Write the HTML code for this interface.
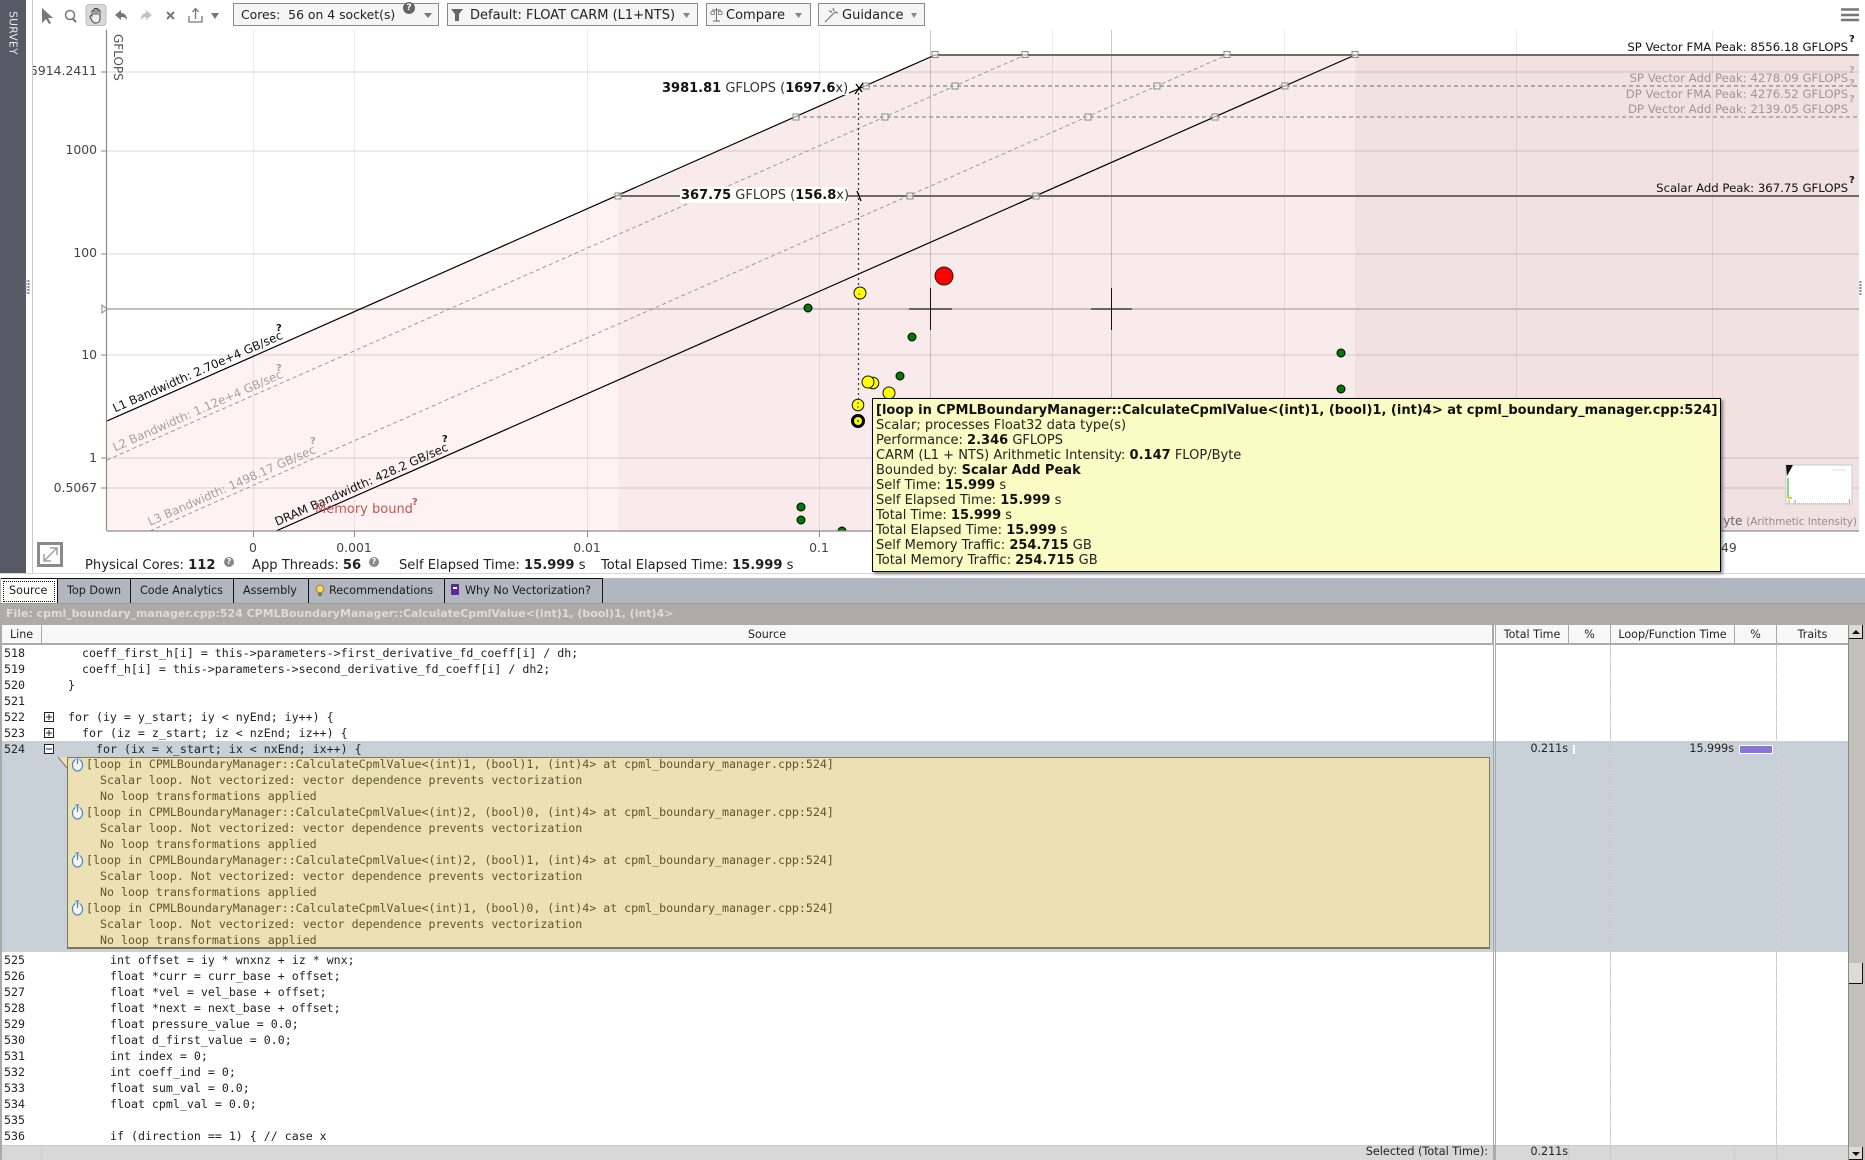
<!DOCTYPE html>
<html><head><meta charset="utf-8">
<style>
html,body{margin:0;padding:0;background:#fff;width:1865px;height:1160px;overflow:hidden;font-family:"DejaVu Sans","Liberation Sans",sans-serif;color:#222}
.a{position:absolute;white-space:pre}
.btn{position:absolute;top:3px;height:23px;background:#f5f5f5;border:1px solid #8a8a8a;box-sizing:border-box}
.tb{font-size:13px;line-height:23px;top:4px;color:#222}
.tab{position:absolute;top:579px;height:24px;box-sizing:border-box;border-right:1px solid #111;font-size:11.2px;line-height:23px;color:#1a1a1a}
.m{font-family:"DejaVu Sans Mono","Liberation Mono",monospace;font-size:11.62px;line-height:16px;height:16px;color:#222}
.n{color:#5c5832}
.hdr{position:absolute;top:625px;height:20px;box-sizing:border-box;border-bottom:2px solid #aaa;border-right:1px solid #aaa;background:#f8f8f8;font-size:11.1px;line-height:20px;text-align:center;color:#222}
.tip{position:absolute;left:872px;top:398px;width:849px;height:174px;background:#fbfbc4;border:1px solid #000;box-sizing:border-box;box-shadow:2px 2px 3px rgba(0,0,0,.45);font-size:13.02px;line-height:15px;padding:4px 0 0 3px;color:#222;white-space:pre}
.tip b{color:#111}
.st{top:558px;font-size:13.1px;line-height:16px}
.q{width:10px;height:10px;border-radius:50%;background:#888;color:#fff;font-size:8px;line-height:10px;text-align:center;font-weight:bold}
.v{width:1px;background:repeating-linear-gradient(#ccc 0,#ccc 15px,#eee 15px,#eee 16px)}
svg text{font-family:"DejaVu Sans","Liberation Sans",sans-serif}
</style></head><body>

<!-- sidebar -->
<div class="a" style="left:0;top:0;width:26px;height:573px;background:#555a65"></div>
<div class="a" style="left:32px;top:0;width:1px;height:573px;background:#c8c8c8"></div>
<div class="a" style="left:13px;top:33px;font-size:10.7px;color:#e8e8e8;transform:translate(-50%,-50%) rotate(90deg);letter-spacing:.3px">SURVEY</div>

<!-- chart -->
<svg class="a" style="left:0;top:0" width="1865" height="580" viewBox="0 0 1865 580">
<defs><clipPath id="c"><rect x="107" y="30" width="1752" height="501"/></clipPath></defs>
<g clip-path="url(#c)">
<polygon points="107,421 618,196 618,531 107,531" fill="#fef3f2"/>
<polygon points="618,196 935,55 1355,55 1355,531 618,531" fill="#f9ebeb"/>
<rect x="1355" y="55" width="504" height="476" fill="#f1e1e1"/>
<g stroke="#000" stroke-opacity=".07" stroke-width="2">
<path d="M107 72H1859M107 151H1859M107 254H1859M107 355H1859M107 458H1859M107 488H1859"/>
</g>
<g stroke="#000" stroke-opacity=".08" stroke-width="1">
<path d="M253.500 30V531M354.500 30V531M587.500 30V531M819.500 30V531M1052.500 30V531M1284.500 30V531M1516.500 30V531M1712.500 30V531"/>
</g>
<path d="M930.500 30V531M1111.500 30V531" stroke="#000" stroke-opacity=".2"/>
<path d="M107 309H1859" stroke="#c4c0c0" stroke-width="2"/>
<path d="M935 55H1859" stroke="#6e6a6a" stroke-width="2"/>
<path d="M866 86H1859" stroke="#aaa" stroke-width="2" stroke-dasharray="4 3"/>
<path d="M796 117H1859" stroke="#b5b0b0" stroke-width="2" stroke-dasharray="4 3"/>
<path d="M618 196H1859" stroke="#6e6a6a" stroke-width="2"/>
<path d="M107 421L935 55" stroke="#000" stroke-width="1.200"/>
<path d="M107 460L1025 55" stroke="#999" stroke-width="1" stroke-dasharray="4 3"/>
<path d="M150 531L1227 55" stroke="#999" stroke-width="1" stroke-dasharray="4 3"/>
<path d="M276 531L1355 55" stroke="#000" stroke-width="1.200"/>
<g fill="#fff" fill-opacity=".6" stroke="#888" stroke-width="1">
<rect x="932" y="51.500" width="6" height="6"/><rect x="1022" y="51.500" width="6" height="6"/><rect x="1224" y="51.500" width="6" height="6"/><rect x="1352" y="51.500" width="6" height="6"/>
<rect x="863" y="83" width="6" height="6"/><rect x="952" y="83" width="6" height="6"/><rect x="1154" y="83" width="6" height="6"/><rect x="1282" y="83" width="6" height="6"/>
<rect x="793" y="114" width="6" height="6"/><rect x="882" y="114" width="6" height="6"/><rect x="1085" y="114" width="6" height="6"/><rect x="1212" y="114" width="6" height="6"/>
<rect x="615" y="193" width="6" height="6"/><rect x="907" y="193" width="6" height="6"/><rect x="1033" y="193" width="6" height="6"/>
</g>
<!-- crosshairs -->
<path d="M909 309H952M1091 309H1132" stroke="#666" stroke-width="2"/>
<path d="M930.500 288V330M1111.500 288V330" stroke="#111"/>
<!-- dotted -->
<path d="M858.500 88V400" stroke="#333" stroke-width="1.200" stroke-dasharray="2 3"/>
<path d="M856 84L862 92M855 94L863 83M857 191L861 201" stroke="#000" stroke-width="1.300"/>
<!-- points -->
<g stroke="#000" stroke-width="1" fill="#007a00">
<circle cx="808" cy="308" r="4"/><circle cx="912" cy="337" r="4"/><circle cx="900" cy="376" r="4"/><circle cx="1341" cy="353" r="4"/><circle cx="1341" cy="389" r="4"/><circle cx="801" cy="507" r="4"/><circle cx="801" cy="520" r="4"/><circle cx="842" cy="531" r="4"/>
</g>
<g stroke="#111" stroke-width="1" fill="#ffff00">
<circle cx="860" cy="293" r="6"/><circle cx="873" cy="383" r="5.800"/><circle cx="868" cy="382" r="6"/><circle cx="889" cy="393" r="6"/><circle cx="858" cy="405" r="5.800"/>
</g>
<circle cx="858" cy="421" r="5.500" fill="#ffff00" stroke="#000" stroke-width="3"/>
<circle cx="858" cy="421" r="1" fill="#333"/><circle cx="858" cy="403" r=".8" fill="#333"/><circle cx="858" cy="407" r=".8" fill="#333"/><circle cx="859" cy="294" r=".7" fill="#333"/>
<circle cx="944" cy="276" r="9" fill="#ff0000" stroke="#222"/>
<!-- diagonal labels -->
<text transform="translate(115,412.500) rotate(-23.800)" font-size="11.800" fill="#111">L1 Bandwidth: 2.70e+4 GB/sec</text>
<text transform="translate(115,451.500) rotate(-23.800)" font-size="11.800" fill="#a5a0a0">L2 Bandwidth: 1.12e+4 GB/sec</text>
<text transform="translate(150,526) rotate(-23.800)" font-size="11.800" fill="#a5a0a0">L3 Bandwidth: 1498.17 GB/sec</text>
<text transform="translate(277,526) rotate(-23.800)" font-size="11.800" fill="#111">DRAM Bandwidth: 428.2 GB/sec</text>
<text x="276" y="331" font-size="10" font-weight="bold" fill="#111">?</text>
<text x="276" y="371" font-size="10" font-weight="bold" fill="#a5a0a0">?</text>
<text x="310" y="444" font-size="10" font-weight="bold" fill="#a5a0a0">?</text>
<text x="442" y="442" font-size="10" font-weight="bold" fill="#111">?</text>
<text x="315" y="513" font-size="13" fill="#c85454">Memory bound</text>
<text x="412" y="505" font-size="10" font-weight="bold" fill="#c85454">?</text>
<!-- peak labels -->
<g text-anchor="end" font-size="11.700">
<text x="1848" y="51" fill="#111">SP Vector FMA Peak: 8556.18 GFLOPS</text>
<text x="1848" y="82" fill="#9c9898">SP Vector Add Peak: 4278.09 GFLOPS</text>
<text x="1848" y="98" fill="#9c9898">DP Vector FMA Peak: 4276.52 GFLOPS</text>
<text x="1848" y="113" fill="#9c9898">DP Vector Add Peak: 2139.05 GFLOPS</text>
<text x="1848" y="192" fill="#111">Scalar Add Peak: 367.75 GFLOPS</text>
<text x="1857" y="525" fill="#666" font-size="12">yte <tspan fill="#8f8f8f" font-size="10.400">(Arithmetic Intensity)</tspan></text>
</g>
<g font-size="10" font-weight="bold">
<text x="1849" y="42" fill="#111">?</text><text x="1849" y="73" fill="#aaa">?</text><text x="1849" y="86" fill="#aaa">?</text><text x="1849" y="102" fill="#aaa">?</text><text x="1849" y="183" fill="#111">?</text>
</g>
<!-- value labels -->
<rect x="661" y="79" width="188" height="16" fill="#fff"/>
<rect x="680" y="187" width="168" height="16" fill="#fff"/>
<text x="662" y="92" font-size="13" fill="#333"><tspan font-weight="bold" fill="#111">3981.81</tspan> GFLOPS (<tspan font-weight="bold" fill="#111">1697.6</tspan>x)</text>
<text x="681" y="199" font-size="13" fill="#333"><tspan font-weight="bold" fill="#111">367.75</tspan> GFLOPS (<tspan font-weight="bold" fill="#111">156.8</tspan>x)</text>
<!-- minimap -->
<rect x="1786" y="465" width="66" height="39" fill="#fff" stroke="#ccc"/>
<polygon points="1786,465 1793,465 1787,476" fill="#111"/>
<path d="M1788 478V498" stroke="#2a2"/>
<path d="M1788 498h4" stroke="#dd0" stroke-width="2"/>
<path d="M1789 500v3M1795 500v3M1849 499l1 4" stroke="#999"/>
<path d="M1787 503.500H1851" stroke="#bbb" stroke-dasharray="1 1"/>
<path d="M1832 470H1846" stroke="#ddd"/>
</g>
<!-- axes -->
<path d="M106.500 30V531M107 531H1859" stroke="#8c8c8c" stroke-width="1.200"/>
<path d="M101 72H107M101 151H107M101 254H107M101 355H107M101 458H107M101 488H107M253.500 531V537M354.500 531V537M587.500 531V537M819.500 531V537" stroke="#888"/>
<polygon points="102,305 107,309 102,313" fill="#fff" stroke="#888"/>
<g font-size="12.400" fill="#444">
<g text-anchor="end">
<text x="97" y="75">5914.2411</text><text x="97" y="154">1000</text><text x="97" y="257">100</text><text x="97" y="359">10</text><text x="97" y="462">1</text><text x="97" y="492">0.5067</text>
</g>
<g text-anchor="middle">
<text x="253" y="552">0</text><text x="354" y="552">0.001</text><text x="587" y="552">0.01</text><text x="819" y="552">0.1</text>
</g>
<text x="1721" y="552">49</text>
</g>
<rect x="26" y="60" width="6" height="20" fill="#fff"/><path d="M32.500 60V80" stroke="#c8c8c8"/>
<text transform="translate(114,34) rotate(90)" font-size="12" fill="#555">GFLOPS</text>
<!-- expand icon -->
<rect x="38.500" y="543.500" width="23" height="22" fill="#fff" stroke="#8a8a8a" stroke-width="3"/>
<path d="M44 561L57 548M50 548H57V555M44 554V561H51" stroke="#a0a0a0" stroke-width="1.500" fill="none"/>
<!-- splitter grips -->
<path d="M28.500 280V294M1860.500 281V295" stroke="#888" stroke-width="2" stroke-dasharray="2 1"/>
<path d="M26 280V294" stroke="#888" stroke-width="1" stroke-dasharray="2 1"/>
<!-- bottom line -->
<path d="M0 573.500H1865" stroke="#d8d8d8"/>
<!-- toolbar icons -->
<path d="M42 8L42 23L46 19L49 24L51 23L48 18L53 18Z" fill="#777"/>
<circle cx="70" cy="15" r="4.500" fill="none" stroke="#777" stroke-width="1.500"/><path d="M73 19L76 22" stroke="#777" stroke-width="2"/>
<rect x="86" y="4.500" width="20" height="21" rx="3" fill="#d8d8d8" stroke="#bbb"/>
<path d="M92 16V11.500a1 1 0 0 1 2 0V15V9.500a1 1 0 0 1 2 0V15V9.500a1 1 0 0 1 2 0V15V11a1 1 0 0 1 2 0V19c0 2-1.500 4-4 4h-1c-2 0-3-2-5-6c0-1 1-2 2-1z" fill="#eee" stroke="#333" stroke-width=".9"/>
<path d="M115 15L121 10V13C124 13 127 15 127 20C125 17 123 17 121 17V20Z" fill="#777"/>
<path d="M152 15L146 10V13C143 13 141 15 141 20C143 17 145 17 146 17V20Z" fill="#c4c4c4"/>
<path d="M167 12L174 19M174 12L167 19" stroke="#777" stroke-width="2"/>
<path d="M189 16V22H202V16M195.500 19V9M192.500 12L195.500 8.500L198.500 12" fill="none" stroke="#777" stroke-width="1.300"/>
<polygon points="211,13 219,13 215,19" fill="#777"/>
<!-- hamburger -->
<path d="M1841 9.500H1859M1841 15H1859M1841 20H1859" stroke="#777" stroke-width="2.500"/>
</svg>

<!-- toolbar buttons -->
<div class="btn" style="left:233px;width:206px"></div>
<div class="btn" style="left:447px;width:251px"></div>
<div class="btn" style="left:706px;width:105px"></div>
<div class="btn" style="left:818px;width:107px"></div>
<div class="a tb" style="left:241px;font-size:12.4px;top:3px">Cores:  56 on 4 socket(s)</div>
<div class="a" style="left:403px;top:2px;width:12px;height:12px;border-radius:50%;background:#666;color:#fff;font-size:9px;line-height:12px;text-align:center;font-weight:bold">?</div>
<svg class="a" style="left:0;top:0" width="930" height="30">
<polygon points="424,13 432,13 428,18" fill="#777"/>
<polygon points="451,9 463,9 459,14 459,21 455,21 455,14" fill="#666"/>
<polygon points="683,13 690,13 686.500,18" fill="#888"/>
<path d="M712 10H721M716.500 8V21M713 21H720" stroke="#666" fill="none" stroke-width=".9"/>
<rect x="711" y="11.500" width="3.500" height="3" fill="none" stroke="#666" stroke-width=".7"/><rect x="718.500" y="11.500" width="3.500" height="3" fill="none" stroke="#666" stroke-width=".7"/>
<polygon points="795,13 802,13 798.500,18" fill="#888"/>
<path d="M825 22L835 12M833 8L834 11M838 13L835 12M829 11L832 12" stroke="#777" stroke-width="1.200" fill="none"/>
<polygon points="911,13 917,13 914,18" fill="#888"/>
</svg>
<div class="a tb" style="left:470px">Default: FLOAT CARM (L1+NTS)</div>
<div class="a tb" style="left:726px">Compare</div>
<div class="a tb" style="left:842px">Guidance</div>

<!-- status -->
<div class="a st" style="left:85px">Physical Cores: <b>112</b></div>
<div class="a q" style="left:224px;top:557px">?</div>
<div class="a st" style="left:252px">App Threads: <b>56</b></div>
<div class="a q" style="left:369px;top:557px">?</div>
<div class="a st" style="left:399px">Self Elapsed Time: <b>15.999</b> s</div>
<div class="a st" style="left:601px">Total Elapsed Time: <b>15.999</b> s</div>

<!-- tooltip -->
<div class="tip"><b>[loop in CPMLBoundaryManager::CalculateCpmlValue&lt;(int)1, (bool)1, (int)4&gt; at cpml_boundary_manager.cpp:524]</b>
Scalar; processes Float32 data type(s)
Performance: <b>2.346</b> GFLOPS
CARM (L1 + NTS) Arithmetic Intensity: <b>0.147</b> FLOP/Byte
Bounded by: <b>Scalar Add Peak</b>
Self Time: <b>15.999</b> s
Self Elapsed Time: <b>15.999</b> s
Total Time: <b>15.999</b> s
Total Elapsed Time: <b>15.999</b> s
Self Memory Traffic: <b>254.715</b> GB
Total Memory Traffic: <b>254.715</b> GB</div>

<!-- tabs -->
<div class="a" style="left:0;top:578px;width:1865px;height:25px;background:#b2b6bf"></div>
<div class="a" style="left:1px;top:578px;width:602px;height:1px;background:#111"></div>
<div class="tab" style="left:1px;width:57px;background:#fff;padding-left:8px"><span class="a" style="left:2px;top:2px;width:50px;height:19px;border:1px dotted #111"></span>Source</div>
<div class="tab" style="left:58px;width:73px;padding-left:9px">Top Down</div>
<div class="tab" style="left:131px;width:103px;padding-left:9px">Code Analytics</div>
<div class="tab" style="left:234px;width:75px;padding-left:9px">Assembly</div>
<div class="tab" style="left:309px;width:136px;padding-left:20px">Recommendations</div>
<div class="tab" style="left:445px;width:158px;padding-left:20px">Why No Vectorization?</div>
<svg class="a" style="left:0;top:578px" width="620" height="25">
<circle cx="320" cy="11" r="3.800" fill="#f6d860" stroke="#a08030"/><rect x="318" y="15" width="4" height="3" fill="#777"/>
<rect x="451" y="6" width="8" height="11" rx="1" fill="#5b2a9d"/><rect x="453" y="9" width="4" height="2" fill="#fff"/>
</svg>

<!-- file bar -->
<div class="a" style="left:0;top:603px;width:1865px;height:22px;background:#acaba7;border-top:1px solid #9a9a96;box-sizing:border-box"></div>
<div class="a" style="left:6px;top:606px;font-size:10.98px;line-height:16px;font-weight:bold;color:#dcdcdc">File: cpml_boundary_manager.cpp:524 CPMLBoundaryManager::CalculateCpmlValue&lt;(int)1, (bool)1, (int)4&gt;</div>

<!-- table headers -->
<div class="a" style="left:0;top:625px;width:2px;height:535px;background:#aaa"></div>
<div class="hdr" style="left:2px;width:40px">Line</div>
<div class="hdr" style="left:42px;width:1451px">Source</div>
<div class="hdr" style="left:1496px;width:73px">Total Time</div>
<div class="hdr" style="left:1569px;width:42px">%</div>
<div class="hdr" style="left:1611px;width:124px">Loop/Function Time</div>
<div class="hdr" style="left:1735px;width:42px">%</div>
<div class="hdr" style="left:1777px;width:71px;border-right:none">Traits</div>

<!-- highlight -->
<div class="a" style="left:2px;top:741px;width:1846px;height:211px;background:#c8d0d8"></div>
<!-- column lines -->
<div class="a" style="left:1493px;top:625px;width:1px;height:535px;background:#aaa"></div>
<div class="a" style="left:1495px;top:625px;width:1px;height:535px;background:#aaa"></div>
<div class="a v" style="left:1610px;top:645px;height:500px"></div>
<div class="a v" style="left:1776px;top:645px;height:500px"></div>

<!-- source lines -->
<div class="a m" style="left:4px;top:645px">518</div><div class="a m" style="left:82px;top:645px">coeff_first_h[i] = this-&gt;parameters-&gt;first_derivative_fd_coeff[i] / dh;</div>
<div class="a m" style="left:4px;top:661px">519</div><div class="a m" style="left:82px;top:661px">coeff_h[i] = this-&gt;parameters-&gt;second_derivative_fd_coeff[i] / dh2;</div>
<div class="a m" style="left:4px;top:677px">520</div><div class="a m" style="left:68px;top:677px">}</div>
<div class="a m" style="left:4px;top:693px">521</div>
<div class="a m" style="left:4px;top:709px">522</div><div class="a m" style="left:68px;top:709px">for (iy = y_start; iy &lt; nyEnd; iy++) {</div>
<div class="a m" style="left:4px;top:725px">523</div><div class="a m" style="left:82px;top:725px">for (iz = z_start; iz &lt; nzEnd; iz++) {</div>
<div class="a m" style="left:4px;top:741px">524</div><div class="a m" style="left:96px;top:741px">for (ix = x_start; ix &lt; nxEnd; ix++) {</div>

<svg class="a" style="left:44px;top:711px" width="14" height="44">
<rect x=".5" y="1.500" width="9" height="9" fill="#fff" stroke="#222"/><path d="M2 6H8M5 3V9" stroke="#222"/>
<rect x=".5" y="17.500" width="9" height="9" fill="#fff" stroke="#222"/><path d="M2 22H8M5 19V25" stroke="#222"/>
<rect x=".5" y="33.500" width="9" height="9" fill="#fff" stroke="#222"/><path d="M2 38H8" stroke="#222"/>
</svg>

<!-- loop notes -->
<div class="a" style="left:67px;top:757px;width:1423px;height:192px;background:#ede0b2;border:1px solid #7d7a5a;border-width:1px 1px 2px 1px;box-sizing:border-box"></div>
<svg class="a" style="left:56px;top:757px" width="40" height="190">
<polygon points="2,0 11,0 11,11" fill="#ede0b2"/><path d="M2 0L11 11" stroke="#7d7a5a"/>
<g fill="#fff" fill-opacity=".65" stroke="#3f82e6" stroke-width="1.200">
<path d="M19.500 2.500a5 6 0 1 0 4 0"/><path d="M19.500 50.500a5 6 0 1 0 4 0"/><path d="M19.500 98.500a5 6 0 1 0 4 0"/><path d="M19.500 146.500a5 6 0 1 0 4 0"/>
</g>
<g fill="none" stroke="#3f82e6" stroke-width="1.200">
<path d="M21.500 0V7M19.500 0H23"/><path d="M21.500 48V55M19.500 48H23"/><path d="M21.500 96V103M19.500 96H23"/><path d="M21.500 144V151M19.500 144H23"/>
</g>
</svg>
<div class="a m n" style="left:86px;top:756px">[loop in CPMLBoundaryManager::CalculateCpmlValue&lt;(int)1, (bool)1, (int)4&gt; at cpml_boundary_manager.cpp:524]</div>
<div class="a m n" style="left:100px;top:772px">Scalar loop. Not vectorized: vector dependence prevents vectorization</div>
<div class="a m n" style="left:100px;top:788px">No loop transformations applied</div>
<div class="a m n" style="left:86px;top:804px">[loop in CPMLBoundaryManager::CalculateCpmlValue&lt;(int)2, (bool)0, (int)4&gt; at cpml_boundary_manager.cpp:524]</div>
<div class="a m n" style="left:100px;top:820px">Scalar loop. Not vectorized: vector dependence prevents vectorization</div>
<div class="a m n" style="left:100px;top:836px">No loop transformations applied</div>
<div class="a m n" style="left:86px;top:852px">[loop in CPMLBoundaryManager::CalculateCpmlValue&lt;(int)2, (bool)1, (int)4&gt; at cpml_boundary_manager.cpp:524]</div>
<div class="a m n" style="left:100px;top:868px">Scalar loop. Not vectorized: vector dependence prevents vectorization</div>
<div class="a m n" style="left:100px;top:884px">No loop transformations applied</div>
<div class="a m n" style="left:86px;top:900px">[loop in CPMLBoundaryManager::CalculateCpmlValue&lt;(int)1, (bool)0, (int)4&gt; at cpml_boundary_manager.cpp:524]</div>
<div class="a m n" style="left:100px;top:916px">Scalar loop. Not vectorized: vector dependence prevents vectorization</div>
<div class="a m n" style="left:100px;top:932px">No loop transformations applied</div>

<div class="a m" style="left:4px;top:952px">525</div><div class="a m" style="left:110px;top:952px">int offset = iy * wnxnz + iz * wnx;</div>
<div class="a m" style="left:4px;top:968px">526</div><div class="a m" style="left:110px;top:968px">float *curr = curr_base + offset;</div>
<div class="a m" style="left:4px;top:984px">527</div><div class="a m" style="left:110px;top:984px">float *vel = vel_base + offset;</div>
<div class="a m" style="left:4px;top:1000px">528</div><div class="a m" style="left:110px;top:1000px">float *next = next_base + offset;</div>
<div class="a m" style="left:4px;top:1016px">529</div><div class="a m" style="left:110px;top:1016px">float pressure_value = 0.0;</div>
<div class="a m" style="left:4px;top:1032px">530</div><div class="a m" style="left:110px;top:1032px">float d_first_value = 0.0;</div>
<div class="a m" style="left:4px;top:1048px">531</div><div class="a m" style="left:110px;top:1048px">int index = 0;</div>
<div class="a m" style="left:4px;top:1064px">532</div><div class="a m" style="left:110px;top:1064px">int coeff_ind = 0;</div>
<div class="a m" style="left:4px;top:1080px">533</div><div class="a m" style="left:110px;top:1080px">float sum_val = 0.0;</div>
<div class="a m" style="left:4px;top:1096px">534</div><div class="a m" style="left:110px;top:1096px">float cpml_val = 0.0;</div>
<div class="a m" style="left:4px;top:1112px">535</div>
<div class="a m" style="left:4px;top:1128px">536</div><div class="a m" style="left:110px;top:1128px">if (direction == 1) { // case x</div>

<!-- values -->
<div class="a" style="right:297px;top:741px;font-size:11.1px;line-height:16px">0.211s</div>
<div class="a" style="left:1573px;top:745px;width:2px;height:9px;background:#fff"></div>
<div class="a" style="right:131px;top:741px;font-size:11.1px;line-height:16px">15.999s</div>
<div class="a" style="left:1739px;top:745px;width:34px;height:9px;background:#8a74d4;border:1px solid #fff;box-sizing:border-box"></div>

<!-- footer -->
<div class="a" style="left:2px;top:1145px;width:1846px;height:15px;background:#d8d8d8;border-top:1px solid #ccc;box-sizing:border-box"></div>
<div class="a" style="left:41px;top:1145px;width:1px;height:15px;background:#ccc"></div>
<div class="a" style="left:1493px;top:1145px;width:3px;height:15px;background:#aaa"></div>
<div class="a" style="left:1568px;top:1145px;width:1px;height:15px;background:#ccc"></div>
<div class="a" style="left:1610px;top:1145px;width:1px;height:15px;background:#ccc"></div>
<div class="a" style="left:1734px;top:1145px;width:1px;height:15px;background:#ccc"></div>
<div class="a" style="left:1776px;top:1145px;width:1px;height:15px;background:#ccc"></div>
<div class="a" style="right:377px;top:1144px;font-size:11.25px;line-height:16px">Selected (Total Time):</div>
<div class="a" style="right:297px;top:1144px;font-size:11.1px;line-height:16px">0.211s</div>

<!-- scrollbar -->
<div class="a" style="left:1848px;top:625px;width:17px;height:535px;background:#c3c1bc;border-left:1px solid #888;box-sizing:border-box"></div>
<div class="a" style="left:1849px;top:625px;width:14px;height:14px;background:#dcdbd6;border-right:1px solid #111;border-bottom:1px solid #111;box-sizing:border-box"></div>
<div class="a" style="left:1852px;top:630px;width:0;height:0;border-left:4px solid transparent;border-right:4px solid transparent;border-bottom:4px solid #111"></div>
<div class="a" style="left:1849px;top:963px;width:14px;height:21px;background:#dcdbd6;border-right:1px solid #111;border-bottom:1px solid #111;box-sizing:border-box"></div>
<div class="a" style="left:1849px;top:1147px;width:14px;height:13px;background:#dcdbd6;border-right:1px solid #111;border-bottom:1px solid #111;box-sizing:border-box"></div>
<div class="a" style="left:1852px;top:1152px;width:0;height:0;border-left:4px solid transparent;border-right:4px solid transparent;border-top:4px solid #111"></div>

</body></html>
